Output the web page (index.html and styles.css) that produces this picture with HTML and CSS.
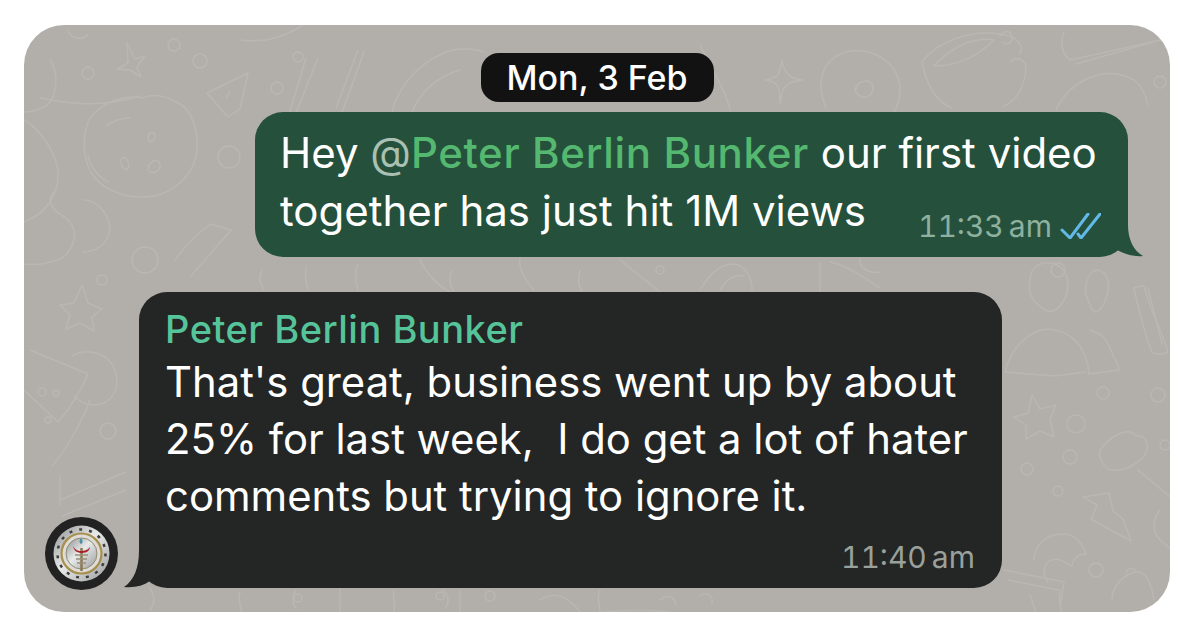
FILE: index.html
```html
<!DOCTYPE html>
<html lang="en">
<head>
    <meta charset="UTF-8">
    <meta name="viewport" content="width=device-width, initial-scale=1.0">
    <title>Chat</title>
    <link rel="stylesheet" href="styles.css">
</head>
<body>

    <div class="chat-panel">
        <!-- Wallpaper doodles, coordinates are page pixels -->
        <svg class="wallpaper" viewBox="24 25 1146 587" fill="none" stroke="#bab7b3" stroke-width="1.5" stroke-linecap="round" stroke-linejoin="round">
            <!-- top left -->
            <path d="M50 60c8 12 8 30 0 42-5 6-16 10-26 10"/>
            <path d="M68 30c2 8 14 12 20 4"/>
            <path d="M127 43l8 16 10-3-8 11 4 10-11-7-13-1 11-6z"/>
            <circle cx="88" cy="73" r="6"/><circle cx="174" cy="45" r="6"/><circle cx="200" cy="61" r="7"/><circle cx="277" cy="88" r="6"/>
            <path d="M207 93l41-20-8 36-12 8z"/><path d="M226 98l4-6"/>
            <path d="M40 98c30 6 60 10 100-2"/>
            <path d="M90 118c12-16 36-24 52-20 14-6 28 0 38 6 14 8 20 34 16 52-4 20-22 36-42 40-24 4-50-4-62-22-10-16-10-40-2-56z"/>
            <path d="M106 126c8-6 16-8 24-8M122 166c-4-8 4-12 6-4s-2 10-6 4M148 170c0-8 10-14 12-6 1 6-6 12-12 6M148 138c0-6 6-8 7-2 0 6-6 8-7 2M88 156c2 8 8 20 20 26"/>
            <circle cx="229" cy="157" r="11"/>
            <path d="M24 120c14 8 30 28 34 50 2 24-12 44-34 52"/>
            <path d="M54 192c-6 6-4 16 6 22 14 8 20 22 8 38-4 8-24 14-44 12"/>
            <path d="M84 200c14 0 26 16 26 30-2 14-14 22-28 22"/>
            <circle cx="145" cy="260" r="13"/><circle cx="102" cy="280" r="5"/>
            <path d="M82 285l6 18 14 6-10 8 2 14-14-8-14 6 4-14-10-10 14-2z"/>
            <path d="M175 260c10-14 24-28 36-36l20 6-40 46"/>
            <!-- left of the second bubble -->
            <path d="M30 350l58 24c-6 14-16 32-30 48l-34-32"/>
            <circle cx="42" cy="392" r="4"/><circle cx="56" cy="393" r="3"/><circle cx="48" cy="420" r="3"/>
            <path d="M72 356c14-8 32-4 40 8 8 14 6 30-6 38-12 6-24 2-32-6"/>
            <path d="M90 400c-8 22-24 50-38 66"/>
            <circle cx="108" cy="431" r="8"/>
            <path d="M60 500l66-28M62 516l64-26M60 476l0 30"/>
            <!-- top middle -->
            <path d="M318 58l-24 60M306 58l-18 60M358 50l-22 58M364 52l-24 66"/>
            <circle cx="298" cy="57" r="5"/>
            <path d="M240 40c30 4 50-6 64-16"/>
            <path d="M392 112c8-32 34-54 60-62 14-2 26 0 32 2M412 112c8-20 26-36 48-42"/>
            <path d="M700 45c10 20 28 50 30 65"/>
            <path d="M782 60c-2 12-2 18-16 20 12 2 14 6 14 24 2-18 6-22 22-24-14-2-18-8-20-20z"/>
            <path d="M826 108c-10-24-6-48 20-56 26-6 52 10 54 36 0 12-2 18-6 24"/>
            <path d="M856 90c0-8 12-12 16-6 4 8-4 16-12 12-4-2-6-6-4-10"/>
            <path d="M922 62c16-22 50-32 78-28 18 2 24 12 20 20M922 62c4 22 14 40 30 46M1004 106c14-6 20-20 22-36 0-12-10-14-16-8"/>
            <path d="M934 66c12-14 36-30 60-26M934 66c20 0 40-6 60-26"/>
            <path d="M1064 32c-4 12-2 22 6 28l90-20M1076 64l84-24M1000 36c4-6 10-6 12 0s-6 10-10 6"/>
            <path d="M1056 110c14-30 50-46 78-30 8 6 12 16 14 26"/>
            <circle cx="1160" cy="82" r="6"/>
            <!-- between the bubbles -->
            <path d="M262 270c-4 8-2 14 2 20M306 268c-2 8 0 14 2 22M358 264c-4 10-2 18 0 26M452 270c-4 8-2 16 2 22"/>
            <path d="M420 260c4 10 20 28 30 32M520 258c-2 10 6 24 14 32M620 260l40 32M700 290c8-14 20-26 32-26 12 0 20 12 20 26M720 290c6-10 14-16 24-14M580 270c-2 10-2 16 2 22"/>
            <path d="M820 262l0 30M830 262c20 4 40 20 50 26M860 258c-2 10 10 16 20 14"/>
            <circle cx="660" cy="270" r="4"/><circle cx="1058" cy="270" r="7"/>
            <!-- right column -->
            <path d="M1045 310c-16-10-18-20-14-36 4-12 18-14 28-8 10 6 12 24 4 36-4 6-10 12-18 8z"/>
            <path d="M1088 300c-6-12 0-28 8-30 10 0 14 10 12 22-2 8-6 18-12 20-4 0-6-6-8-12z"/>
            <path d="M1005 372c8-30 30-46 50-42 20 4 32 20 34 44M1005 372l50 4 30-4"/>
            <path d="M1090 330c8 4 14 4 18 14l12 26-32 4"/>
            <path d="M1140 286l4 0c8 30 20 50 24 66-6 2-12 4-16 0-6-14-14-44-18-64z"/><path d="M1148 288l14 56"/>
            <circle cx="1103" cy="393" r="6"/><circle cx="1158" cy="395" r="7"/><circle cx="1076" cy="424" r="9"/><circle cx="1070" cy="457" r="7"/><circle cx="1027" cy="469" r="6"/><circle cx="1058" cy="491" r="5"/><circle cx="1096" cy="570" r="7"/><circle cx="1165" cy="445" r="5"/>
            <path d="M1032 395l8 14 16-4-6 14 4 18-14-6-14 8 0-14-12-8 14-4z"/>
            <path d="M1100 450c10-14 28-24 36-14 12-2 14 12 8 20-6 8-22 16-32 14-8 0-14-14-12-20z"/>
            <path d="M1138 470l36 30"/>
            <path d="M1083 497l26-4 4 18 10 8 8 22-26-14-14-8 6-14z"/>
            <path d="M1034 560c0-16 14-26 28-26 12 0 20 8 24 20-8 0-14 6-14 12-4 0-14-12-24-4-4 4-6 12 0 20"/>
            <path d="M1004 570l60 12-4 24M1008 580l50 10"/>
            <path d="M1112 600c0-16 14-26 24-28 10-2 16 14 18 28M1126 574c0-6 8-8 10-2"/>
            <path d="M1160 510c-8 10-8 20 0 30l12 10"/>
            <!-- bottom edge -->
            <path d="M150 588c4 8 6 14 0 22M240 592c-2 6 0 14 2 20M296 590c-4 6-4 14 0 18M340 588l0 24M394 590c-2 6 2 12 0 22M442 590c6 4 8 10 4 18M460 590l0 22M540 600c12-8 26-6 40 12M600 590c-4 8 0 14 0 22 30-2 50-2 70 0M660 600c8-6 14-4 16 4"/>
            <circle cx="440" cy="596" r="4"/><circle cx="298" cy="598" r="4"/><circle cx="490" cy="596" r="5"/>
            <path d="M700 596c6-6 14 0 12 8"/>
            <path d="M1030 595l6 17M1060 590c-2 8 0 14 2 22"/>
        </svg>

        <div class="date-pill">Mon, 3 Feb</div>

        <div class="bubble bubble-out">
            <svg class="tail tail-out" viewBox="1100 225 44 32"><path d="M1128 225C1128 240 1134 251 1143 256 1134 257 1124 254 1117 250L1100 240Z"/></svg>
            <p class="message">Hey <span class="at">@</span><span class="mention">Peter Berlin Bunker</span> our first video<br>together has just hit 1M views</p>
            <div class="meta">
                <span class="time">11:33 am</span>
                <svg class="ticks" viewBox="1062 212 41 26" fill="none" stroke="#62b8e6" stroke-width="3" stroke-linecap="round" stroke-linejoin="round">
                    <path d="M1064 229l8 8 18-24"/>
                    <path d="M1080 233l3 4 19-24"/>
                </svg>
            </div>
        </div>

        <div class="incoming-row">
            <div class="avatar">
                <svg viewBox="0 0 73 73">
                    <defs>
                        <linearGradient id="metal" x1="0" y1="0" x2="1" y2="1">
                            <stop offset="0" stop-color="#8d8f90"/>
                            <stop offset="0.45" stop-color="#e8e9e9"/>
                            <stop offset="1" stop-color="#9a9c9d"/>
                        </linearGradient>
                    </defs>
                    <circle cx="36.5" cy="36.5" r="36.5" fill="#222"/>
                    <circle cx="36.5" cy="36.5" r="28" fill="url(#metal)"/>
                    <circle cx="36.5" cy="36.5" r="24" fill="none" stroke="#3f3d3b" stroke-width="2.5" stroke-dasharray="3 7"/>
                    <circle cx="36.5" cy="36.5" r="20" fill="#dedcd6" stroke="#a78f4e" stroke-width="2.2"/>
                    <circle cx="36.5" cy="36.5" r="15.5" fill="url(#metal)" stroke="#8f8a70" stroke-width="1"/>
                    <path d="M36.5 31v23" stroke="#8a7750" stroke-width="2.5"/>
                    <path d="M30 38l13 0M31 42l11 0M32 46l9 0" stroke="#9b9078" stroke-width="1.6"/>
                    <path d="M28 29c2 4 5 5 8 5s7-1 9-4c0 3-3 6-8 6s-8-2-9-7z" fill="#a8242c"/>
                    <path d="M36 21c2 2 2 5 0 6-2-1-2-4 0-6z" fill="#4b8fa6"/>
                </svg>
            </div>
            <div class="bubble bubble-in">
                <svg class="tail tail-in" viewBox="124 550 44 38"><path d="M139 550C139 568 134 580 124 587 134 588 143 586 150 581L168 570Z"/></svg>
                <div class="sender">Peter Berlin Bunker</div>
                <p class="message">That's great, business went up by about<br>25% for last week,&nbsp; I do get a lot of hater<br>comments but trying to ignore it.</p>
                <div class="meta"><span class="time">11:40 am</span></div>
            </div>
        </div>
    </div>

</body>
</html>
```

FILE: styles.css
```css
* {
    box-sizing: border-box;
    margin: 0;
    padding: 0;
    font-family: "Inter", "Liberation Sans", sans-serif;
}

body {
    width: 1200px;
    height: 639px;
    overflow: hidden;
    background-color: #fff;
    padding: 25px 30px 27px 24px;
}

.chat-panel {
    position: relative;
    display: flex;
    flex-direction: column;
    width: 1146px;
    height: 587px;
    padding-top: 28px;
    background-color: #b2afab;
    border-radius: 40px;
    overflow: hidden;
}

.wallpaper {
    position: absolute;
    left: 0;
    top: 0;
    width: 1146px;
    height: 587px;
}

.date-pill {
    position: relative;
    align-self: center;
    width: 233px;
    height: 49px;
    line-height: 49px;
    text-align: center;
    font-size: 34px;
    font-weight: 500;
    color: #fff;
    background-color: #121212;
    border-radius: 18px;
}

.bubble {
    position: relative;
    color: #fff;
    border-radius: 28px;
}

.bubble-out {
    align-self: flex-end;
    width: 873px;
    height: 145px;
    margin-top: 10px;
    margin-right: 42px;
    padding: 12px 0 0 25px;
    background-color: #25503b;
}

.bubble-in {
    width: 863px;
    height: 296px;
    padding: 12px 0 0 26px;
    background-color: #232624;
}

.message {
    font-size: 42px;
    line-height: 58px;
    white-space: nowrap;
}

.bubble-in .message {
    font-size: 41.8px;
    line-height: 57px;
}

.at {
    color: #a9c0b2;
}

.mention {
    color: #55b870;
    font-weight: 500;
    letter-spacing: 0.65px;
}

.sender {
    font-size: 38px;
    font-weight: 500;
    letter-spacing: 0.5px;
    line-height: 50px;
    color: #56c49a;
}

.meta {
    position: absolute;
    right: 27px;
    bottom: 13px;
    display: flex;
    align-items: center;
    gap: 8px;
}

.time {
    font-size: 30px;
    font-variant-numeric: tabular-nums;
    word-spacing: -3px;
    color: #9aa09c;
    white-space: nowrap;
}

.bubble-out .time {
    color: #8eb09f;
}

.ticks {
    width: 41px;
    height: 26px;
}

.tail {
    position: absolute;
    bottom: 0;
}

.tail-out {
    left: 845px;
    width: 44px;
    height: 32px;
    fill: #25503b;
}

.tail-in {
    left: -15px;
    width: 44px;
    height: 38px;
    fill: #232624;
}

.incoming-row {
    display: flex;
    align-items: flex-end;
    gap: 21px;
    margin-top: 35px;
    padding-left: 21px;
}

.avatar {
    position: relative;
    width: 73px;
    height: 73px;
    margin-bottom: -2px;
}

.avatar svg {
    display: block;
    width: 73px;
    height: 73px;
}
```
